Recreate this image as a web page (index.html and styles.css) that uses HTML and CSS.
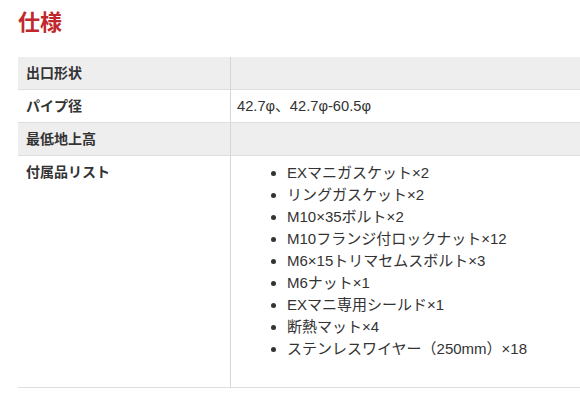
FILE: index.html
```html
<!DOCTYPE html>
<html lang="ja">
<head>
<meta charset="utf-8">
<link rel="stylesheet" href="styles.css">
</head>
<body>
<div class="page">
  <h2 class="title">仕様</h2>
  <table class="spec">
    <tr class="gray">
      <th>出口形状</th>
      <td></td>
    </tr>
    <tr>
      <th>パイプ径</th>
      <td>42.7φ、42.7φ-60.5φ</td>
    </tr>
    <tr class="gray">
      <th>最低地上高</th>
      <td></td>
    </tr>
    <tr>
      <th>付属品リスト</th>
      <td>
        <ul class="items">
          <li>EXマニガスケット×2</li>
          <li>リングガスケット×2</li>
          <li>M10×35ボルト×2</li>
          <li>M10フランジ付ロックナット×12</li>
          <li>M6×15トリマセムスボルト×3</li>
          <li>M6ナット×1</li>
          <li>EXマニ専用シールド×1</li>
          <li>断熱マット×4</li>
          <li>ステンレスワイヤー（250mm）×18</li>
        </ul>
      </td>
    </tr>
  </table>
</div>
</body>
</html>
```

FILE: styles.css
```css
html, body {
  margin: 0;
  padding: 0;
  background: #fff;
  overflow: hidden;
}
body {
  font-family: "Liberation Sans", Arial, "Noto Sans CJK JP", sans-serif;
  color: #333;
}
.page {
  padding-left: 18px;
}
.title {
  margin: 11px 0 0 0;
  font-family: "Liberation Sans", "Noto Sans CJK JP", sans-serif;
  font-size: 22px;
  line-height: 24px;
  font-weight: bold;
  color: #c0282d;
  height: 24px;
  padding-bottom: 22px;
}
.spec {
  width: 100%;
  border-collapse: collapse;
  font-size: 14px;
  line-height: 20px;
}
.spec tr {
  border-bottom: 1px solid #dedede;
}
.spec tr.gray {
  background: #eeeeee;
}
.spec th {
  width: 196px;
  text-align: left;
  font-weight: bold;
  vertical-align: top;
  padding: 6px 8px 6px 8px;
  border-right: 1px solid #d6d6d6;
  color: #333;
  font-family: "Liberation Sans", "Noto Sans CJK JP", sans-serif;
}
.spec td {
  vertical-align: top;
  padding: 6px 6px 6px 6px;
  height: 20px;
  font-size: 14.7px;
}
.items {
  margin: 0 0 21px 0;
  padding-left: 50px;
  list-style: disc;
}
.items li {
  line-height: 22px;
  font-size: 15px;
}
```
